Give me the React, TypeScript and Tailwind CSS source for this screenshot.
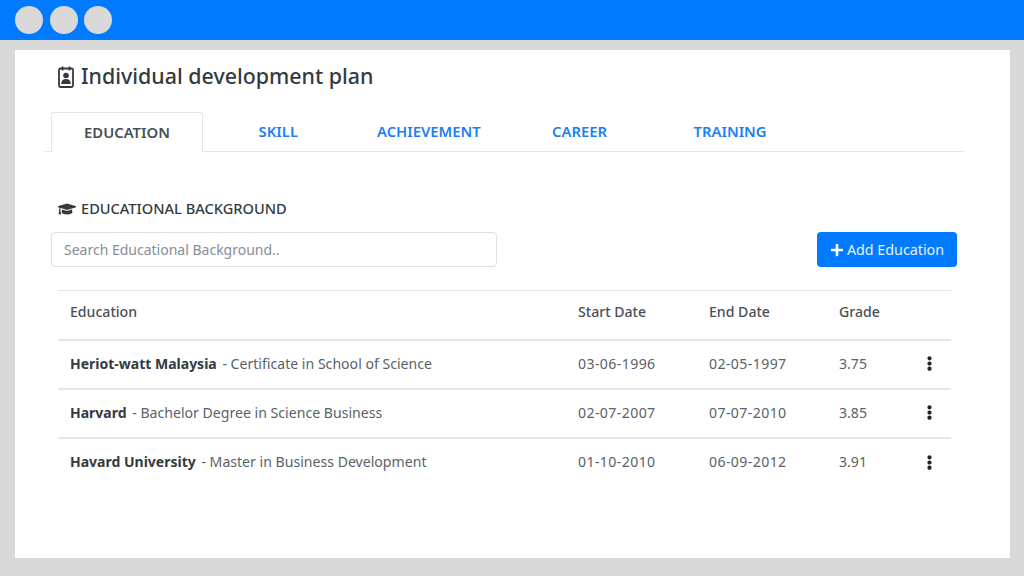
import React from 'react';
import { FaEllipsisV, FaGraduationCap, FaPlus } from 'react-icons/fa';

const tabs = ['EDUCATION', 'SKILL', 'ACHIEVEMENT', 'CAREER', 'TRAINING'];

const rows = [
  { school: 'Heriot-watt Malaysia', course: 'Certificate in School of Science', start: '03-06-1996', end: '02-05-1997', grade: '3.75' },
  { school: 'Harvard', course: 'Bachelor Degree in Science Business', start: '02-07-2007', end: '07-07-2010', grade: '3.85' },
  { school: 'Havard University', course: 'Master in Business Development', start: '01-10-2010', end: '06-09-2012', grade: '3.91' },
];

function BadgeIcon() {
  return (
    <svg viewBox="0 0 16 22" className="w-[16px] h-[22px] mr-[7px] shrink-0" aria-hidden="true">
      <rect x="1" y="2.5" width="14" height="18.5" rx="1.5" fill="none" stroke="#343a40" strokeWidth="1.8" />
      <path d="M4.5 0.5v4M11.5 0.5v4" stroke="#343a40" strokeWidth="1.8" />
      <circle cx="8" cy="9.5" r="2.8" fill="#343a40" />
      <path d="M3.2 18c0-3.4 1.9-4.9 4.8-4.9s4.8 1.5 4.8 4.9z" fill="#343a40" />
    </svg>
  );
}

export default function App() {
  return (
    <div className="w-[1024px] h-[576px] overflow-hidden bg-[#d9d9d9] font-['Noto_Sans',sans-serif] text-[#343a40]">
      {/* Window bar */}
      <div className="h-10 bg-[#007bff] flex items-center gap-[6.5px] pl-[15px]">
        <div className="w-[28px] h-[28px] rounded-full bg-[#d9d9d9]"></div>
        <div className="w-[28px] h-[28px] rounded-full bg-[#d9d9d9]"></div>
        <div className="w-[28px] h-[28px] rounded-full bg-[#d9d9d9]"></div>
      </div>

      <div className="ml-[15px] mt-[10px] w-[995px] h-[508px] bg-white pt-[13px]">
        <h1 className="flex items-center h-[28px] pl-[43px] text-[21.4px] font-medium text-[#343a40]">
          <BadgeIcon />
          <span className="-mt-[1px]">Individual development plan</span>
        </h1>

        {/* Tabs */}
        <div className="flex ml-[30px] mr-[46px] mt-[21px] h-[40px] pl-[6px] border-b border-[#e3e6e9]">
          {tabs.map((tab, i) => (
            <div
              key={tab}
              className={
                i === 0
                  ? 'w-[152px] h-[40px] flex items-center justify-center text-[14.8px] font-semibold text-[#495057] bg-white border border-b-0 border-[#e3e6e9] rounded-t-[3px]'
                  : 'w-[150.6px] h-[39px] flex items-center justify-center text-[14.8px] font-semibold text-[#1a7ff5]'
              }
            >
              {tab}
            </div>
          ))}
        </div>

        <h2 className="flex items-center h-[20px] mt-[47px] pl-[43px] text-[14.6px] font-medium text-[#343a40]">
          <FaGraduationCap className="w-[18px] h-[18px] mr-[5px] shrink-0" />
          EDUCATIONAL BACKGROUND
        </h2>

        {/* Search and add */}
        <div className="flex justify-between items-center ml-[36px] mr-[53px] mt-[13px]">
          <input
            placeholder="Search Educational Background.."
            className="w-[446px] h-[35px] px-3 text-[14px] bg-white border border-[#dcdfe3] rounded-[4px] outline-none placeholder:text-[#868e96]"
          />
          <button className="w-[140px] h-[35px] flex items-center justify-center gap-[3px] text-[14.3px] text-[#e8f2ff] bg-[#007bff] rounded-[4px]">
            <FaPlus className="w-[14px] h-[14px] text-white" />
            Add Education
          </button>
        </div>

        <table className="ml-[43px] mt-[23px] w-[893px] table-fixed border-collapse text-[14.1px] text-[#5a6268]">
          <thead>
            <tr className="h-[49px] border-t border-b-2 border-[#e4e6e8] text-left text-[#495057]">
              <th className="w-[508px] pl-3 pb-[6px] font-medium">Education</th>
              <th className="w-[131px] pl-3 pb-[6px] font-medium">Start Date</th>
              <th className="w-[130px] pl-3 pb-[6px] font-medium">End Date</th>
              <th className="w-[80px] pl-3 pb-[6px] font-medium">Grade</th>
              <th></th>
            </tr>
          </thead>
          <tbody>
            {rows.map((row, i) => (
              <tr key={row.school} className={i < rows.length - 1 ? 'h-[49px] border-b-2 border-[#e4e6e8]' : 'h-[49px]'}>
                <td className="pl-3 pb-[1px]">
                  <span className="font-bold text-[14px] text-[#343a40] mr-[2px]">{row.school}</span> - {row.course}
                </td>
                <td className="pl-3 pb-[1px] tracking-[0.4px]">{row.start}</td>
                <td className="pl-3 pb-[1px] tracking-[0.4px]">{row.end}</td>
                <td className="pl-3 pb-[1px]">{row.grade}</td>
                <td className="pb-[1px]">
                  <FaEllipsisV className="w-[15px] h-[15px] text-[#212529] ml-[15px]" />
                </td>
              </tr>
            ))}
          </tbody>
        </table>
      </div>
    </div>
  );
}
